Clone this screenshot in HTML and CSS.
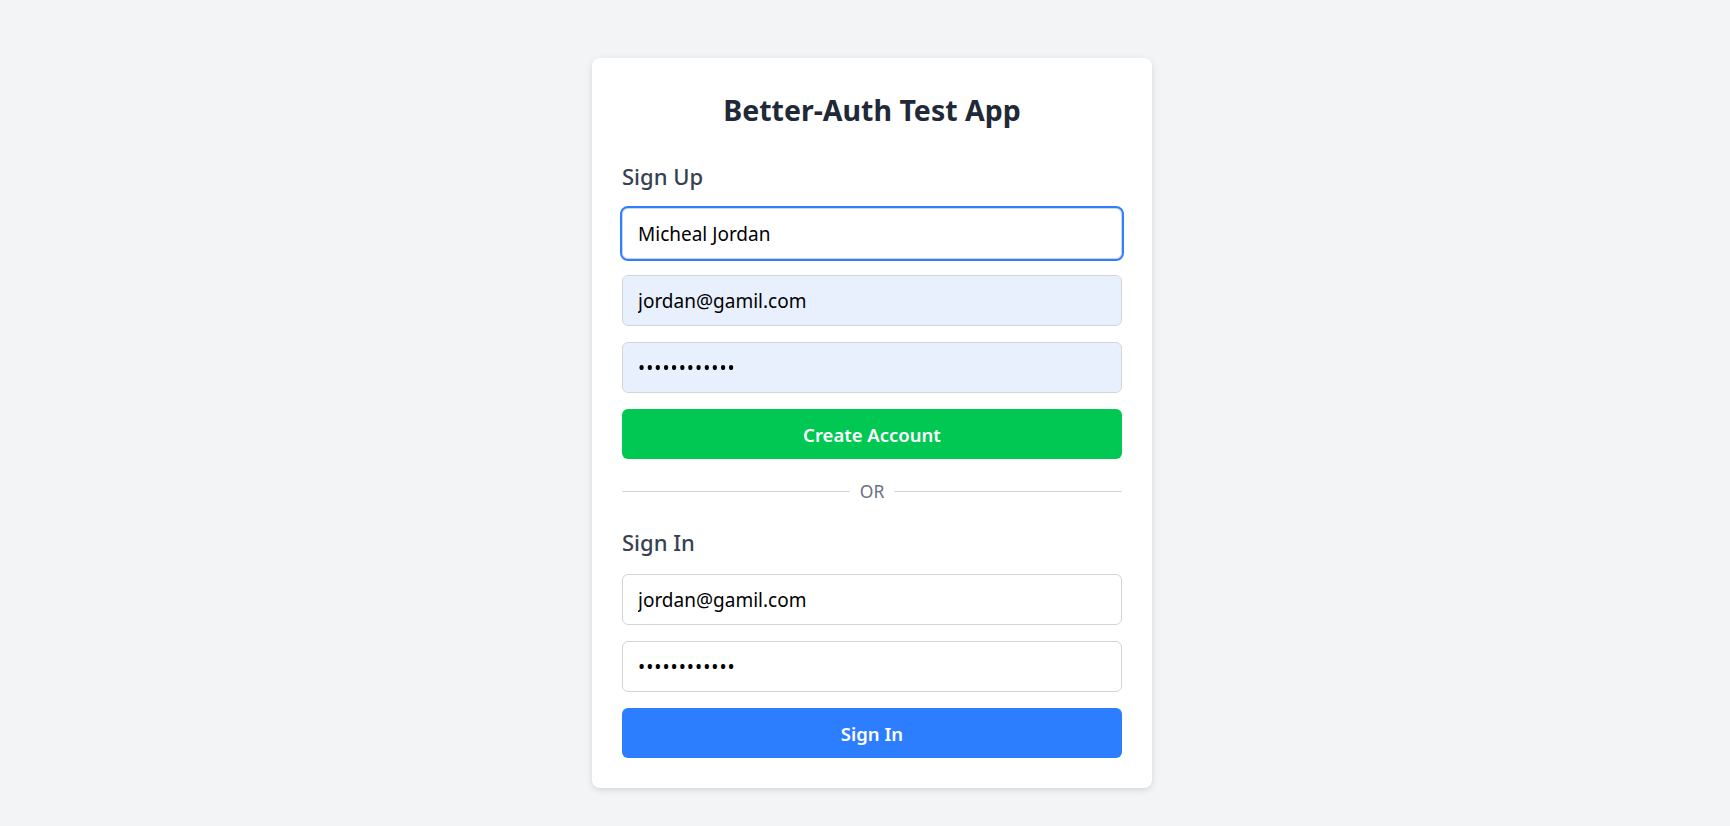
FILE: index.html
```html
<!DOCTYPE html>
<html lang="en">
  <head>
    <meta charset="UTF-8" />
    <meta name="viewport" content="width=device-width, initial-scale=1.0" />
    <title>Better-Auth Test App</title>
    <link rel="stylesheet" href="styles.css">
  </head>
  <body>
    <div class="container">
      <h1>Better-Auth Test App</h1>

      <!-- 회원가입 -->
      <form id="signup-form" class="auth-form">
        <h2>Sign Up</h2>
        <input type="text" id="signup-name" class="field is-focused" value="Micheal Jordan" />
        <input type="email" id="signup-email" class="field is-autofill" value="jordan@gamil.com" />
        <input type="password" id="signup-password" class="field is-autofill" value="jordan123456" />
        <button type="submit" class="btn btn-green">Create Account</button>
      </form>

      <div class="divider"><span>OR</span></div>

      <!-- 로그인 -->
      <form id="signin-form" class="auth-form">
        <h2>Sign In</h2>
        <input type="email" id="signin-email" class="field" value="jordan@gamil.com" />
        <input type="password" id="signin-password" class="field" value="jordan123456" />
        <button type="submit" class="btn btn-blue">Sign In</button>
      </form>
    </div>
    <script>
      // 이름 입력칸에 커서를 끝에 둔다
      const nameInput = document.getElementById("signup-name");
      nameInput.focus();
      nameInput.setSelectionRange(nameInput.value.length, nameInput.value.length);
    </script>
  </body>
</html>
```

FILE: styles.css
```css
* {
  box-sizing: border-box;
  margin: 0;
  padding: 0;
}
body {
  background-color: #f3f4f6;
  font-family: "Segoe UI", "Noto Sans", "Open Sans", sans-serif;
  padding: 58px 0 0 14px;
  height: 100vh;
}
.container {
  width: 560px;
  margin: 0 auto;
  background-color: #fff;
  padding: 30px;
  border-radius: 8px;
  box-shadow: 0 2px 6px rgba(0, 0, 0, 0.12);
}
h1 {
  text-align: center;
  color: #1f2937;
  font-size: 28.5px;
  line-height: 44px;
  font-weight: 700;
  margin-bottom: 30px;
}
h2 {
  color: #374151;
  font-size: 22px;
  line-height: 28px;
  font-weight: 500;
  margin-bottom: 18px;
}
.auth-form {
  display: flex;
  flex-direction: column;
  gap: 16px;
}
.auth-form h2 {
  margin-bottom: 2px;
}
.field {
  width: 100%;
  height: 51px;
  padding: 0 15px;
  border: 1px solid #d1d5db;
  border-radius: 6px;
  font-family: inherit;
  font-size: 19px;
  color: #000;
  background-color: #fff;
  outline: none;
  caret-color: #000;
}
.field[type="password"] {
  letter-spacing: 1px;
}
.field.is-focused,
.field.is-focused:focus {
  outline: 2px solid #2f80ff;
}
.field.is-autofill {
  background-color: #e8f0fe;
}
.btn {
  height: 50px;
  border: none;
  border-radius: 6px;
  color: #fff;
  font-family: inherit;
  font-size: 18.5px;
  font-weight: 600;
  cursor: pointer;
}
.btn-green {
  background-color: #00c853;
}
.btn-blue {
  background-color: #2d7eff;
}
.divider {
  display: flex;
  align-items: center;
  margin: 24px 0 29px;
  color: #6b7280;
  font-size: 17.5px;
  line-height: 16px;
}
.divider::before,
.divider::after {
  content: "";
  flex: 1;
  height: 1px;
  background-color: #d1d5db;
}
.divider span {
  padding: 0 10px;
}
```
